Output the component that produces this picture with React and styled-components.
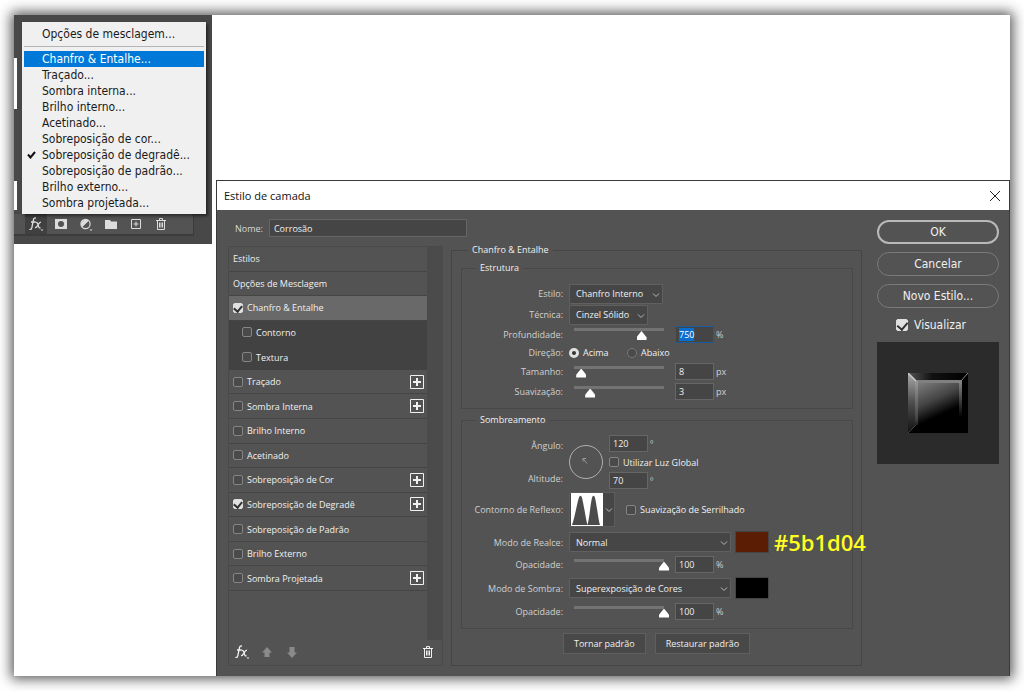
import React, { useEffect, useRef } from 'react'
import styled, { createGlobalStyle } from 'styled-components'

const menuItems = [
  'Chanfro & Entalhe...',
  'Traçado...',
  'Sombra interna...',
  'Brilho interno...',
  'Acetinado...',
  'Sobreposição de cor...',
  'Sobreposição de degradê...',
  'Sobreposição de padrão...',
  'Brilho externo...',
  'Sombra projetada...',
]

const effects = [
  { name: 'Chanfro & Entalhe', checked: true, active: true },
  { name: 'Contorno', sub: true },
  { name: 'Textura', sub: true },
  { name: 'Traçado', add: true },
  { name: 'Sombra Interna', add: true },
  { name: 'Brilho Interno' },
  { name: 'Acetinado' },
  { name: 'Sobreposição de Cor', add: true },
  { name: 'Sobreposição de Degradê', checked: true, add: true },
  { name: 'Sobreposição de Padrão' },
  { name: 'Brilho Externo' },
  { name: 'Sombra Projetada', add: true },
]

const FxIcon = () => (
  <svg width="16" height="16" viewBox="0 0 16 16" fill="none" stroke="currentColor" strokeWidth="1.3">
    <path d="M8 2.2C6.4 1.6 5.7 2.5 5.4 4L3.9 11.4C3.6 13 2.9 13.8 1.4 13.3M3 6h4.6" />
    <path d="M7.6 6.4c1.3-.4 1.8.3 2.2 1.6l.7 2.4c.4 1.3.9 1.7 2 1.2M13 6.2c-1.4 0-2 1-2.8 2.4-.9 1.500-1.500 3.200-3.200 3.100" />
    <path d="M12.500 13.500h3l-1.500 1.500z" fill="currentColor" stroke="none" />
  </svg>
)

const MaskIcon = () => (
  <svg width="16" height="16" viewBox="0 0 16 16">
    <path fillRule="evenodd" fill="currentColor" d="M2 3h12v10H2zM8 5a3 3 0 1 0 0 6 3 3 0 0 0 0-6z" />
  </svg>
)

const AdjustIcon = () => (
  <svg width="16" height="16" viewBox="0 0 16 16">
    <circle cx="7.500" cy="8" r="4.600" fill="none" stroke="currentColor" strokeWidth="1.200" />
    <path d="M4.200 11.300A4.700 4.700 0 0 1 10.800 4.700z" fill="currentColor" />
    <path d="M11.500 13.500h3L13 15z" fill="currentColor" />
  </svg>
)

const FolderIcon = () => (
  <svg width="16" height="16" viewBox="0 0 16 16">
    <path fill="currentColor" d="M2 4h5l1 1.500h6V13H2z" />
  </svg>
)

const NewIcon = () => (
  <svg width="16" height="16" viewBox="0 0 16 16" fill="none" stroke="currentColor">
    <path d="M3.500 3.500h9v9h-9zM8 5.500v5M5.500 8h5" />
  </svg>
)

const TrashIcon = () => (
  <svg width="16" height="16" viewBox="0 0 16 16" fill="none" stroke="currentColor">
    <path d="M3 4.500h10M6.500 4.500v-2h3v2M4.500 4.500v9h7v-9M6.500 6.500v5M8 6.500v5M9.500 6.500v5" />
  </svg>
)

const ArrowIcon = ({ down }) => (
  <svg width="16" height="16" viewBox="0 0 16 16">
    <path fill="currentColor" d={down ? 'M8 14l5-5.500h-2.500V3h-5v5.500H3z' : 'M8 3l5 5.500h-2.500V13h-5V8.500H3z'} />
  </svg>
)

const PlusIcon = () => (
  <svg width="14" height="14" viewBox="0 0 14 14" fill="none" stroke="currentColor">
    <path d="M.5.5h13v13H.5z" />
    <path d="M7 3v8M3 7h8" strokeWidth="2" />
  </svg>
)

const Chevron = () => (
  <svg width="8" height="6" viewBox="0 0 8 6" fill="none" stroke="#b8b8b8">
    <path d="M1 1.500l3 3 3-3" />
  </svg>
)

const CloseIcon = () => (
  <svg width="12" height="12" viewBox="0 0 12 12" fill="none" stroke="#222">
    <path d="M1 1l10 10M11 1L1 11" />
  </svg>
)

const ContourIcon = () => (
  <svg width="32" height="33" viewBox="0 0 32 33">
    <path fill="#fff" d="M0 0h32v33H0z" />
    <path fill="#4b4b4b" d="M1 32C4 24 7 5 8.500 3.500Q9.500 2 10.500 3.500C12 6 14.500 25 16.500 32zM16.500 32C18.500 25 20 6 21.500 3.500Q22.500 2 23.500 3.500C25 6 27 25 29 32z" />
  </svg>
)

const BevelPreview = () => (
  <svg width="60" height="60" viewBox="0 0 60 60">
    <defs>
      <linearGradient id="face" x1="0.200" y1="0" x2="0.600" y2="0.850">
        <stop offset="0" stopColor="#7a7a7a" />
        <stop offset="0.500" stopColor="#444" />
        <stop offset="0.900" stopColor="#000" />
      </linearGradient>
      <linearGradient id="left" x1="0" y1="0" x2="0" y2="1">
        <stop offset="0" stopColor="#aaa" />
        <stop offset="0.500" stopColor="#4c4c4c" />
        <stop offset="1" stopColor="#111" />
      </linearGradient>
      <linearGradient id="top" x1="0" y1="0" x2="1" y2="0">
        <stop offset="0" stopColor="#555" />
        <stop offset="0.400" stopColor="#111" />
        <stop offset="1" stopColor="#000" />
      </linearGradient>
      <linearGradient id="edge" x1="0" y1="0" x2="0" y2="1">
        <stop offset="0" stopColor="#999" />
        <stop offset="0.850" stopColor="#444" />
        <stop offset="1" stopColor="#222" />
      </linearGradient>
      <linearGradient id="fade" x1="0" y1="0" x2="0" y2="1">
        <stop offset="0" stopColor="#888" />
        <stop offset="1" stopColor="#000" />
      </linearGradient>
    </defs>
    <path d="M0 0h60v60H0z" />
    <path fill="url(#top)" d="M0 0h60l-7 8H8z" />
    <path fill="url(#left)" d="M0 0l8 8v44l-8 8z" />
    <path fill="url(#face)" d="M8 8h45v44H8z" />
    <path fill="#808080" d="M7 7h47v3H7z" />
    <path fill="url(#edge)" d="M7 8h3v44H7z" />
    <path fill="url(#fade)" d="M51 8h3v36h-3z" />
    <path stroke="#ccc" strokeWidth="1.500" d="M0 0l8 8" />
    <path stroke="#888" d="M60 0l-7 8" />
    <path stroke="#444" d="M0 60l8-8" fill="none" />
  </svg>
)

const Select = ({ id, width, value, label }) => (
  <SelectBox $width={width}>
    <select id={id} aria-label={label} defaultValue={value}>
      <option>{value}</option>
    </select>
    <Chevron />
  </SelectBox>
)

const SliderRow = ({ id, label, value, pos, unit, height, selected }) => {
  const field = useRef(null)

  useEffect(() => {
    if (selected) {
      field.current.focus()
      field.current.select()
    }
  }, [selected])

  return (
    <Row $height={height}>
      <Label htmlFor={id}>{label}</Label>
      <Slider type="range" defaultValue={pos} aria-label={label} />
      <Field id={id} ref={field} type="text" defaultValue={value} />
      <Unit>{unit}</Unit>
    </Row>
  )
}

const LayersPanel = () => (
  <Panel>
    <PanelTop>
      <Thumb $height={51} />
      <Thumb $height={29} />
    </PanelTop>
    <PanelBar>
      <IconButton $pressed aria-label="Estilo"><FxIcon /></IconButton>
      <IconButton aria-label="Máscara"><MaskIcon /></IconButton>
      <IconButton aria-label="Ajuste"><AdjustIcon /></IconButton>
      <IconButton aria-label="Grupo"><FolderIcon /></IconButton>
      <IconButton aria-label="Nova camada"><NewIcon /></IconButton>
      <IconButton aria-label="Excluir"><TrashIcon /></IconButton>
    </PanelBar>
    <Menu>
      <MenuItem>Opções de mesclagem...</MenuItem>
      <MenuLine />
      {menuItems.map((item, i) => (
        <MenuItem key={item} $active={i === 0}>
          {i === 6 && (
            <svg width="9" height="8" viewBox="0 0 9 8" fill="none" stroke="#111" strokeWidth="2">
              <path d="M1 3.500l2.500 3L8 1" />
            </svg>
          )}
          {item}
        </MenuItem>
      ))}
    </Menu>
  </Panel>
)

const StyleList = () => (
  <ListBox>
    <ListBody>
      <List>
        <ListItem>Estilos</ListItem>
        <ListItem>Opções de Mesclagem</ListItem>
        {effects.map((effect) => (
          <ListItem key={effect.name} $active={effect.active} $sub={effect.sub}>
            <CheckLabel>
              <Check type="checkbox" defaultChecked={effect.checked} />
              {effect.name}
            </CheckLabel>
            {effect.add && <IconButton $small aria-label={'Adicionar ' + effect.name}><PlusIcon /></IconButton>}
          </ListItem>
        ))}
      </List>
      <Track />
    </ListBody>
    <ListFooter>
      <IconButton aria-label="Efeitos"><FxIcon /></IconButton>
      <IconButton $dim aria-label="Subir"><ArrowIcon /></IconButton>
      <IconButton $dim aria-label="Descer"><ArrowIcon down /></IconButton>
      <IconButton $last aria-label="Excluir efeito"><TrashIcon /></IconButton>
    </ListFooter>
  </ListBox>
)

const Structure = () => (
  <Group>
    <legend>Estrutura</legend>
    <Row $height={21}>
      <Label htmlFor="estilo">Estilo:</Label>
      <Select id="estilo" width={94} value="Chanfro Interno" />
    </Row>
    <Row $height={21}>
      <Label htmlFor="tecnica">Técnica:</Label>
      <Select id="tecnica" width={79} value="Cinzel Sólido" />
    </Row>
    <SliderRow id="prof" label="Profundidade:" value="750" pos={75} unit="%" height={18} selected />
    <Row $height={19}>
      <Label as="span">Direção:</Label>
      <RadioLabel><Radio type="radio" name="direcao" defaultChecked />Acima</RadioLabel>
      <RadioLabel><Radio type="radio" name="direcao" />Abaixo</RadioLabel>
    </Row>
    <SliderRow id="tam" label="Tamanho:" value="8" pos={8} unit="px" height={19} />
    <SliderRow id="suav" label="Suavização:" value="3" pos={18} unit="px" height={21} />
  </Group>
)

const Shading = () => (
  <Group>
    <legend>Sombreamento</legend>
    <AngleRow>
      <AngleCol $labels>
        <Label htmlFor="angulo">Ângulo:</Label>
        <Label htmlFor="altitude">Altitude:</Label>
      </AngleCol>
      <svg width="34" height="34" viewBox="0 0 34 34" fill="none" stroke="#b0b0b0">
        <circle cx="17" cy="17" r="16.500" />
        <path d="M14 13.500h3M14 13.500v3M14 13.500l4 5" stroke="#999" />
      </svg>
      <AngleCol>
        <AngleLine><Field id="angulo" type="text" defaultValue="120" /><Unit>º</Unit></AngleLine>
        <CheckLabel><Check type="checkbox" />Utilizar Luz Global</CheckLabel>
        <AngleLine><Field id="altitude" type="text" defaultValue="70" /><Unit>º</Unit></AngleLine>
      </AngleCol>
    </AngleRow>
    <Row $height={41}>
      <Label as="span">Contorno de Reflexo:</Label>
      <Contour aria-label="Contorno de Reflexo"><ContourIcon /><Chevron /></Contour>
      <CheckLabel><Check type="checkbox" />Suavização de Serrilhado</CheckLabel>
    </Row>
    <Row $height={24}>
      <Label htmlFor="realce">Modo de Realce:</Label>
      <Select id="realce" width={162} value="Normal" />
      <Swatch $color="#5b1d04" aria-label="Cor do realce" />
      <HexNote>#5b1d04</HexNote>
    </Row>
    <SliderRow id="op1" label="Opacidade:" value="100" pos={100} unit="%" height={21} />
    <Row $height={26}>
      <Label htmlFor="sombra">Modo de Sombra:</Label>
      <Select id="sombra" width={162} value="Superexposição de Cores" />
      <Swatch $color="#000" aria-label="Cor da sombra" />
    </Row>
    <SliderRow id="op2" label="Opacidade:" value="100" pos={100} unit="%" height={21} />
  </Group>
)

const App = () => {
  return (
    <Sheet>
      <GlobalStyle />
      <LayersPanel />
      <Dialog>
        <TitleBar>
          <h1>Estilo de camada</h1>
          <IconButton $small aria-label="Fechar"><CloseIcon /></IconButton>
        </TitleBar>
        <Body>
          <Main>
            <NameRow>
              <label htmlFor="nome">Nome:</label>
              <NameField id="nome" type="text" defaultValue="Corrosão" />
            </NameRow>
            <Columns>
              <StyleList />
              <Settings>
                <legend>Chanfro &amp; Entalhe</legend>
                <Structure />
                <Shading />
                <Actions>
                  <FlatButton>Tornar padrão</FlatButton>
                  <FlatButton>Restaurar padrão</FlatButton>
                </Actions>
              </Settings>
            </Columns>
          </Main>
          <Side>
            <PillButton $primary>OK</PillButton>
            <PillButton>Cancelar</PillButton>
            <PillButton>Novo Estilo...</PillButton>
            <PreviewLabel><Check $big type="checkbox" defaultChecked />Visualizar</PreviewLabel>
            <Preview><BevelPreview /></Preview>
          </Side>
        </Body>
      </Dialog>
    </Sheet>
  )
}

export default App

const GlobalStyle = createGlobalStyle`
  * {
    box-sizing: border-box;
  }
  body {
    margin: 0;
    background: #fff;
    overflow: hidden;
    font-family: 'Open Sans', 'Noto Sans', sans-serif;
    font-size: 9px;
  }
  button, input, select {
    font: inherit;
    color: inherit;
    margin: 0;
  }
`

const Sheet = styled.div`
  display: grid;
  grid-template-columns: 198px 1fr;
  gap: 4px;
  margin: 15px 14px;
  min-height: calc(100vh - 30px);
  background: #fff;
  box-shadow: 0 0 12px 3px rgba(0, 0, 0, 0.65);
`

const Panel = styled.section`
  position: relative;
  align-self: start;
  background: #484848;
  padding-bottom: 8px;
`

const PanelTop = styled.div`
  display: flex;
  flex-direction: column;
  gap: 72px;
  height: 199px;
  padding-top: 43px;
`

const Thumb = styled.div`
  width: 3px;
  height: ${(props) => props.$height}px;
  background: #fff;
`

const PanelBar = styled.div`
  display: flex;
  gap: 3px;
  height: 22px;
  margin-right: 18px;
  padding-left: 11px;
  color: #dcdcdc;
  background: #535353;
  border-bottom: 2px solid #3c3c3c;
  border-right: 1px solid #3c3c3c;
`

const IconButton = styled.button`
  display: flex;
  align-items: center;
  justify-content: center;
  width: ${(props) => (props.$small ? 'auto' : '22px')};
  padding: 0;
  border: 0;
  background: ${(props) => (props.$pressed ? '#404040' : 'none')};
  color: ${(props) => (props.$dim ? '#8a8a8a' : 'inherit')};
  margin-left: ${(props) => (props.$last ? 'auto' : '0')};
`

const Menu = styled.ul`
  position: absolute;
  top: 7px;
  left: 8px;
  width: 184px;
  margin: 0;
  padding: 4px 2px 3px;
  list-style: none;
  background: #f0f0f0;
  color: #1a1a1a;
  font-family: 'DejaVu Sans Condensed', 'DejaVu Sans', sans-serif;
  font-size: 12px;
  box-shadow: 2px 2px 3px rgba(0, 0, 0, 0.5);
`

const MenuItem = styled.li`
  position: relative;
  height: 16px;
  line-height: 16px;
  padding-left: 18px;
  color: ${(props) => (props.$active ? '#fff' : 'inherit')};
  background: ${(props) => (props.$active ? '#0078d7' : 'none')};

  svg {
    position: absolute;
    left: 3px;
    top: 4px;
  }
`

const MenuLine = styled.li`
  height: 1px;
  margin: 4px 0 4px;
  background: #b4b4b4;
`

const Dialog = styled.section`
  display: flex;
  flex-direction: column;
  margin-top: 165px;
  border: 1px solid #3a3a3a;
  border-bottom: 0;
  background: #535353;
  color: #f0f0f0;
`

const TitleBar = styled.header`
  display: flex;
  align-items: center;
  justify-content: space-between;
  height: 29px;
  padding: 0 8px 0 7px;
  background: #fff;
  color: #111;

  h1 {
    margin: 0;
    font-size: 11px;
    font-weight: 400;
  }
`

const Body = styled.div`
  display: flex;
  flex: 1;
  gap: 15px;
  padding: 9px 10px 10px 11px;
`

const Main = styled.div`
  display: flex;
  flex-direction: column;
  flex: 1;
`

const NameRow = styled.div`
  display: flex;
  align-items: center;
  gap: 6px;
  padding-left: 7px;
  color: #d8d8d8;
`

const NameField = styled.input`
  width: 198px;
  height: 18px;
  padding: 0 4px;
  border: 1px solid #666;
  background: #454545;
  color: #f0f0f0;
`

const Columns = styled.div`
  display: grid;
  grid-template-columns: 215px 1fr;
  gap: 8px;
  flex: 1;
  margin-top: 6px;
`

const ListBox = styled.div`
  display: flex;
  flex-direction: column;
  margin-top: 3px;
  border: 1px solid #4a4a4a;
`

const ListBody = styled.div`
  display: flex;
  flex: 1;
`

const List = styled.ul`
  display: grid;
  grid-auto-rows: 1fr;
  align-self: start;
  flex: 1;
  height: 344px;
  margin: 0;
  padding: 0;
  list-style: none;
`

const ListItem = styled.li`
  display: flex;
  align-items: center;
  justify-content: space-between;
  padding: 0 3px 0 ${(props) => (props.$sub ? 13 : 4)}px;
  background: ${(props) => (props.$active ? '#696969' : props.$sub ? '#424242' : 'none')};
  border-bottom: 1px solid ${(props) => (props.$sub ? '#424242' : '#454545')};
`

const Track = styled.div`
  width: 15px;
  background: #4b4b4b;
`

const ListFooter = styled.div`
  display: flex;
  align-items: center;
  gap: 3px;
  height: 25px;
  padding: 0 3px 2px 2px;
`

const CheckLabel = styled.label`
  display: flex;
  align-items: center;
  gap: 4px;
`

const Check = styled.input`
  appearance: none;
  width: ${(props) => (props.$big ? 12 : 10)}px;
  height: ${(props) => (props.$big ? 12 : 10)}px;
  border: 1px solid #858585;
  border-radius: 2px;
  background: #4a4a4a;

  &:checked {
    border-color: #e0e0e0;
    background: #e0e0e0;
  }
  &:checked::after {
    content: '';
    display: block;
    width: ${(props) => (props.$big ? 5 : 4)}px;
    height: ${(props) => (props.$big ? 8 : 6)}px;
    margin: 0 auto;
    border: solid #333;
    border-width: 0 2px 2px 0;
    transform: rotate(40deg);
  }
`

const Radio = styled.input`
  appearance: none;
  width: 10px;
  height: 10px;
  border: 1px solid #777;
  border-radius: 50%;
  background: #4a4a4a;

  &:checked {
    border: 3px solid #e0e0e0;
    background: #333;
  }
`

const RadioLabel = styled.label`
  display: flex;
  align-items: center;
  gap: 4px;
  width: 52px;
`

const Settings = styled.fieldset`
  display: flex;
  flex-direction: column;
  gap: 4px;
  margin: 0;
  padding: 4px 8px 9px 9px;
  border: 1px solid #454545;

  legend {
    margin-left: 7px;
    padding: 0 4px;
    line-height: 14px;
  }
`

const Group = styled.fieldset`
  margin: 0;
  padding: 8px 0 6px;
  border: 1px solid #484848;

  legend {
    margin-left: 14px;
  }
`

const Row = styled.div`
  position: relative;
  display: flex;
  align-items: center;
  gap: 6px;
  height: ${(props) => props.$height}px;
`

const Label = styled.label`
  width: 101px;
  color: #d0d0d0;
  text-align: right;
`

const SelectBox = styled.div`
  position: relative;
  width: ${(props) => props.$width}px;

  select {
    appearance: none;
    display: block;
    width: 100%;
    height: 20px;
    padding: 0 6px;
    border: 1px solid #606060;
    border-radius: 1px;
    background: #464646;
  }
  svg {
    position: absolute;
    right: 3px;
    top: 8px;
    pointer-events: none;
  }
`

const Slider = styled.input`
  appearance: none;
  width: 100px;
  height: 12px;
  background: none;

  &::-webkit-slider-runnable-track {
    height: 12px;
    background: linear-gradient(#737373, #737373) 5px 0 / calc(100% - 10px) 3px no-repeat;
  }
  &::-webkit-slider-thumb {
    appearance: none;
    width: 10px;
    height: 9px;
    margin-top: 3px;
    background: #fff;
    clip-path: polygon(50% 0, 100% 70%, 100% 100%, 0 100%, 0 70%);
  }
`

const Field = styled.input`
  width: 39px;
  height: 17px;
  padding: 0 3px;
  border: 1px solid #666;
  background: #454545;

  &:focus {
    outline: 0;
    border-color: #1b5c9e;
  }
  &::selection {
    background: #0a6ed1;
    color: #fff;
  }
`

const Unit = styled.span`
  color: #d0d0d0;
  margin-left: -4px;
`

const AngleRow = styled.div`
  display: flex;
  align-items: center;
  gap: 6px;
`

const AngleCol = styled.div`
  display: flex;
  flex-direction: column;
  justify-content: space-between;
  height: ${(props) => (props.$labels ? 46 : 54)}px;
`

const AngleLine = styled.div`
  display: flex;
  align-items: center;
  gap: 6px;
`

const Contour = styled.button`
  display: flex;
  align-items: center;
  gap: 2px;
  margin-right: 5px;
  padding: 0 1px;
  border: 1px solid #5c5c5c;
  background: #464646;
`

const Swatch = styled.button`
  width: 34px;
  height: 22px;
  margin-left: -2px;
  border: 1px solid #444;
  background: ${(props) => props.$color};
`

const HexNote = styled.strong`
  position: absolute;
  left: 312px;
  color: #ffff21;
  font-size: 22px;
  font-weight: 600;
`

const Actions = styled.div`
  display: flex;
  gap: 9px;
  padding-left: 102px;
`

const FlatButton = styled.button`
  height: 21px;
  padding: 0 10px;
  border: 1px solid #5f5f5f;
  background: #484848;
`

const Side = styled.aside`
  display: flex;
  flex-direction: column;
  gap: 8px;
  width: 122px;
  padding-top: 1px;
`

const PillButton = styled.button`
  height: 24px;
  border: ${(props) => (props.$primary ? '2px solid #b9b9b9' : '1px solid #7a7a7a')};
  border-radius: 12px;
  background: none;
  font-family: 'DejaVu Sans Condensed', 'DejaVu Sans', sans-serif;
  font-size: 12px;
`

const PreviewLabel = styled.label`
  display: flex;
  align-items: center;
  align-self: center;
  gap: 6px;
  height: 18px;
  padding-right: 14px;
  font-family: 'DejaVu Sans Condensed', 'DejaVu Sans', sans-serif;
  font-size: 12px;
`

const Preview = styled.div`
  display: flex;
  align-items: center;
  justify-content: center;
  height: 122px;
  background: #2b2b2b;
`
